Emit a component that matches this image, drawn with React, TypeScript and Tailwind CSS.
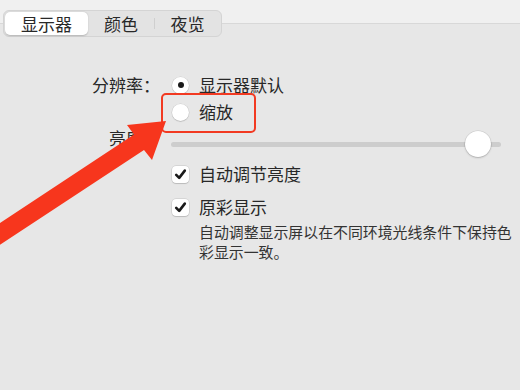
import React from "react";

const font = { fontFamily: '"Noto Sans CJK SC", "Noto Sans", sans-serif' };

function Radio({ checked }: { checked?: boolean }) {
  return (
    <div className="w-[17px] h-[17px] rounded-full bg-white shadow-[0_0_0_0.5px_rgba(0,0,0,0.12),0_1px_1px_rgba(0,0,0,0.12)] flex items-center justify-center shrink-0">
      {checked && <div className="w-[6px] h-[6px] rounded-full bg-[#1a1a1a]" />}
    </div>
  );
}

function Check() {
  return (
    <div className="w-[17px] h-[17px] rounded-[4px] bg-white shadow-[0_0_0_0.5px_rgba(0,0,0,0.15),0_1px_1px_rgba(0,0,0,0.12)] flex items-center justify-center shrink-0">
      <svg width="13" height="13" viewBox="0 0 13 13">
        <path d="M2.2 6.9 L5.2 9.9 L10.8 2.6" fill="none" stroke="#1a1a1a" strokeWidth="2.6" strokeLinecap="round" strokeLinejoin="round" />
      </svg>
    </div>
  );
}

export default function App() {
  return (
    <div className="relative w-[520px] h-[390px] overflow-hidden bg-[#e7e7e7] text-[#282828]" style={font}>
      <div className="h-[24px] bg-[#f0f0f0] border-b border-[#d8d8d8]" />
      <div className="ml-[3px] mt-[-14px] w-[219px] h-[27px] rounded-[6px] bg-[#e3e3e3] border border-[#d4d4d4] flex items-stretch p-[1px] text-[17px] leading-none">
        <div className="w-[83px] rounded-[5px] bg-white shadow-[0_0.5px_1.5px_rgba(0,0,0,0.2)] flex items-center justify-center">显示器</div>
        <div className="w-[66px] flex items-center justify-center">颜色</div>
        <div className="w-[1px] my-[6px] bg-[#cfcfcf]" />
        <div className="flex-1 flex items-center justify-center">夜览</div>
      </div>

      <div className="mt-[35px] text-[17px]">
        <div className="flex h-[26px] items-center">
          <div className="w-[160px] text-right">分辨率：</div>
          <div className="ml-[12px] flex items-center gap-[10px]">
            <Radio checked />
            <span>显示器默认</span>
          </div>
        </div>
        <div className="flex h-[26px] items-center mt-[1px]">
          <div className="w-[160px]" />
          <div className="ml-[12px] flex items-center gap-[10px]">
            <Radio />
            <span>缩放</span>
          </div>
        </div>
        <div className="flex h-[32px] items-start">
          <div className="w-[160px] text-right leading-[26px]">亮度：</div>
          <div className="ml-[11px] pt-[6px]">
            <div className="relative w-[330px] h-[26px] flex items-center">
              <div className="w-full h-[5px] rounded-full bg-[#cdcdcd]" />
              <div className="absolute left-[294px] top-0 w-[26px] h-[26px] rounded-full bg-white shadow-[0_0_0_0.5px_rgba(0,0,0,0.12),0_1px_2px_rgba(0,0,0,0.2)]" />
            </div>
          </div>
        </div>
        <div className="flex h-[26px] items-center mt-[4px]">
          <div className="w-[160px]" />
          <div className="ml-[12px] flex items-center gap-[10px]">
            <Check />
            <span>自动调节亮度</span>
          </div>
        </div>
        <div className="flex h-[26px] items-center mt-[7px]">
          <div className="w-[160px]" />
          <div className="ml-[12px] flex items-center gap-[10px]">
            <Check />
            <span>原彩显示</span>
          </div>
        </div>
        <div className="ml-[199px] mt-[2px] w-[320px] text-[14.9px] leading-[20px] text-[#333333]">
          自动调整显示屏以在不同环境光线条件下保持色彩显示一致。
        </div>
      </div>

      <div className="absolute left-[161px] top-[93px] w-[95px] h-[40px] rounded-[5px] border-[2.5px] border-[#f23a22]" />
      <svg className="absolute left-0 top-0" width="520" height="390" viewBox="0 0 520 390">
        <polygon
          points="166,121 127,125 134,134.5 -25,239.5 -15,254.5 144,150 152,160"
          fill="#f7361d"
        />
      </svg>
    </div>
  );
}
